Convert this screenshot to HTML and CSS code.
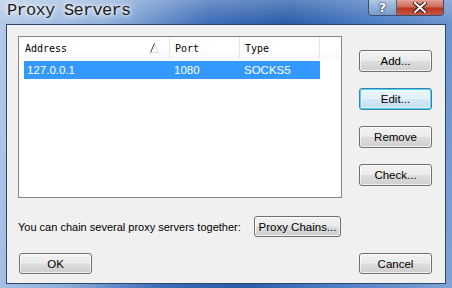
FILE: index.html
```html
<!DOCTYPE html>
<html lang="en">
<head>
<meta charset="UTF-8">
<meta name="viewport" content="width=device-width, initial-scale=1.0">
<title>Proxy Servers</title>
<link rel="stylesheet" href="styles.css">
</head>
<body>

<div class="window">
    <div class="titlebar">
        <span class="title">Proxy Servers</span>
        <div class="caption-btns">
            <div class="cap help">?</div>
            <div class="cap close">
                <svg width="14" height="11" viewBox="0 0 14 11">
                    <path d="M2 1 L12 10 M12 1 L2 10" stroke="#3d1a14" stroke-width="4" stroke-linecap="square"/>
                    <path d="M2 1 L12 10 M12 1 L2 10" stroke="#fff" stroke-width="2" stroke-linecap="square"/>
                </svg>
            </div>
        </div>
    </div>

    <div class="client">
        <div class="main">
            <div class="listview">
                <div class="lv-header">
                    <div class="col col-addr">Address
                        <svg class="sort" width="9" height="10" viewBox="0 0 9 10">
                            <path d="M0.5 9.5 L8.5 9.5 L4.5 0.5" fill="none" stroke="#d8dce2"/>
                            <path d="M0.5 9.5 L4.5 0.5" stroke="#3c3c3c"/>
                        </svg>
                    </div>
                    <div class="col col-port">Port</div>
                    <div class="col col-type">Type</div>
                    <div class="col col-rest"></div>
                </div>
                <div class="lv-row selected">
                    <span class="cell cell-addr">127.0.0.1</span>
                    <span class="cell cell-port">1080</span>
                    <span class="cell cell-type">SOCKS5</span>
                </div>
            </div>
            <div class="side-btns">
                <button class="btn">Add...</button>
                <button class="btn focused">Edit...</button>
                <button class="btn">Remove</button>
                <button class="btn">Check...</button>
            </div>
        </div>

        <div class="chain">
            <span class="chain-label">You can chain several proxy servers together:</span>
            <button class="btn btn-chain">Proxy Chains...</button>
        </div>

        <div class="footer">
            <button class="btn">OK</button>
            <button class="btn">Cancel</button>
        </div>
    </div>
</div>

</body>
</html>
```

FILE: styles.css
```css
html, body {
    margin: 0;
    padding: 0;
}
body {
    width: 452px;
    height: 288px;
    overflow: hidden;
    font-family: Tahoma, "Liberation Sans", Arial, sans-serif;
    font-size: 11px;
    color: #000;
}
.window {
    box-sizing: border-box;
    width: 452px;
    height: 288px;
    padding: 0 6px 4px 6px;
    display: flex;
    flex-direction: column;
    background:
        linear-gradient(180deg, rgba(255,255,255,0.25) 0px, rgba(255,255,255,0) 24px),
        linear-gradient(100deg, #b6cbe8 0%, #8fb0db 22%, #3c6cb8 42%, #2a5ba9 58%, #4a7bc2 75%, #7fa3d6 100%);
}
.titlebar {
    height: 24px;
    display: flex;
    align-items: flex-start;
}
.title {
    font-family: "Liberation Mono", monospace;
    font-size: 17px;
    letter-spacing: -0.7px;
    line-height: 21px;
    margin-left: 1px;
    color: #1c1c1c;
    text-shadow: 0 0 6px #e8eef8, 0 0 10px #e8eef8, 0 0 3px #ffffff;
}
.caption-btns {
    margin-left: auto;
    margin-right: 2px;
    display: flex;
    height: 15px;
    border: 1px solid #3a4e70;
    border-top: none;
    border-radius: 0 0 4px 4px;
    overflow: hidden;
}
.cap {
    display: flex;
    align-items: center;
    justify-content: center;
    height: 15px;
}
.help {
    width: 27px;
    background: linear-gradient(180deg, #b5c8e2 0%, #93afd6 50%, #7a9bc9 100%);
    border-right: 1px solid #4b5f80;
    color: #fff;
    font-family: "DejaVu Sans", sans-serif;
    font-weight: bold;
    font-size: 13px;
    text-shadow: 0 0 1px #2d3b55, 0 0 1px #2d3b55, 0 0 2px #2d3b55;
}
.close {
    width: 46px;
    background: linear-gradient(180deg, #e4a195 0%, #d06a58 45%, #b83522 55%, #c9563f 100%);
}
.client {
    flex: 1;
    background: #f0f0f0;
    border: 1px solid #2c4870;
    display: flex;
    flex-direction: column;
    padding: 11px 13px 9px 11px;
}
.main {
    display: flex;
    gap: 17px;
}
.listview {
    box-sizing: border-box;
    width: 324px;
    height: 162px;
    background: #fff;
    border: 1px solid #828790;
}
.lv-header {
    display: flex;
    height: 22px;
    background: linear-gradient(180deg, #ffffff 0%, #ffffff 60%, #f7f8fa 100%);
    font-family: "DejaVu Sans Mono", "Liberation Mono", monospace;
    font-size: 10px;
}
.col {
    box-sizing: border-box;
    display: flex;
    align-items: center;
    padding-left: 6px;
    border-right: 1px solid #e3e5e8;
    position: relative;
}
.col-addr { width: 151px; }
.col-port { width: 70px; padding-left: 5px; }
.col-type { width: 80px; padding-left: 5px; }
.col-rest { flex: 1; border-right: none; }
.sort {
    position: absolute;
    right: 10px;
    top: 6px;
}
.lv-row {
    display: flex;
    height: 18px;
    align-items: center;
    margin: 2px 0 0 5px;
    width: 296px;
    font-size: 11.5px;
}
.lv-row.selected {
    background: #3399ff;
    color: #fff;
}
.cell-addr { width: 147px; padding-left: 3px; }
.cell-port { width: 70px; }
.cell-type { padding-left: 0; }
.side-btns {
    display: flex;
    flex-direction: column;
    gap: 16px;
    padding-top: 14px;
}
.btn {
    box-sizing: border-box;
    width: 73px;
    height: 22px;
    padding: 0;
    font-family: inherit;
    font-size: 11.5px;
    color: #000;
    border: 1px solid #707070;
    border-radius: 3px;
    background: linear-gradient(180deg, #f2f2f2 0%, #ebebeb 48%, #dddddd 52%, #cfcfcf 100%);
    box-shadow: inset 0 0 0 1px rgba(255,255,255,0.7);
}
.btn.focused {
    border-color: #3c7fb1;
    box-shadow: inset 0 0 0 1px #48d4f5, inset 0 0 0 2px rgba(255,255,255,0.5);
    background: linear-gradient(180deg, #eaf6fd 0%, #e3f1fb 48%, #d4e9f7 52%, #c4dcee 100%);
}
.chain {
    display: flex;
    align-items: center;
    margin-top: 18px;
}
.chain-label {
    width: 236px;
}
.btn-chain {
    width: 87px;
    height: 21px;
}
.footer {
    display: flex;
    justify-content: space-between;
    margin-top: auto;
    padding-left: 1px;
}
.footer .btn {
    height: 21px;
}
```
